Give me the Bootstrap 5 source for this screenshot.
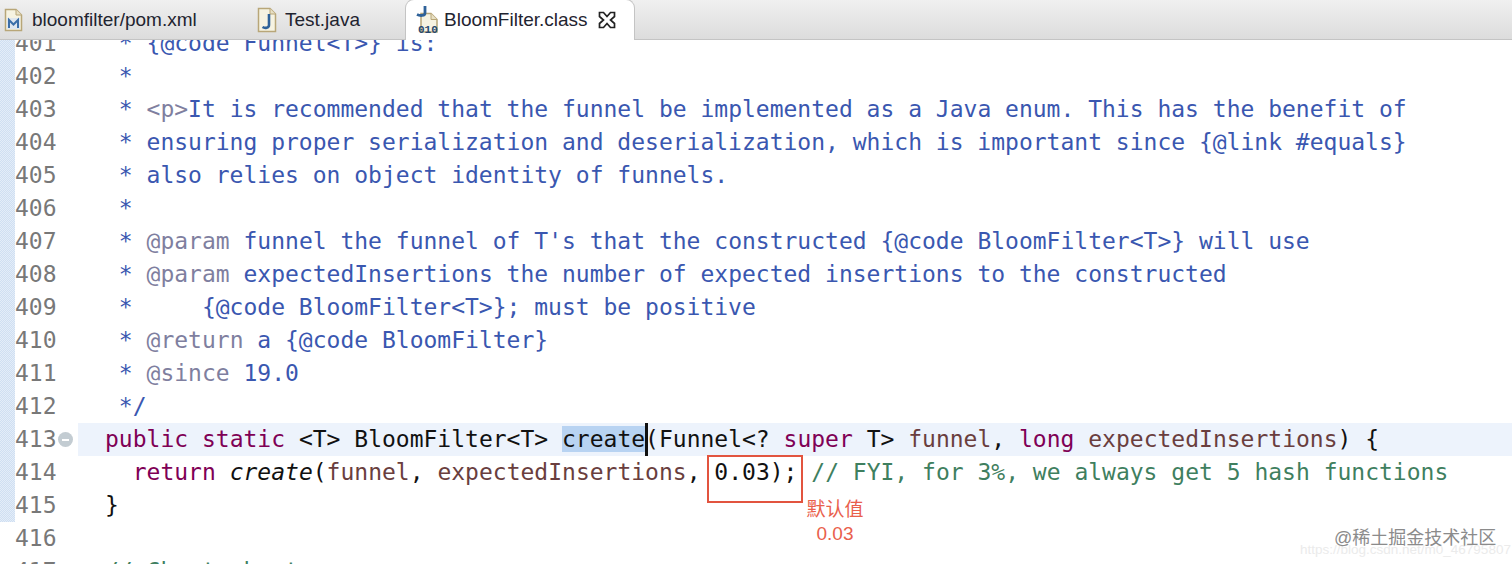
<!DOCTYPE html>
<html lang="en">
<head>
<meta charset="utf-8">
<title>BloomFilter.class</title>
<link href="https://cdn.jsdelivr.net/npm/bootstrap@5.3.0/dist/css/bootstrap.min.css" rel="stylesheet">
<style>
html,body{height:564px;overflow:hidden;background:#fff}
.tabbar{height:40px;background:linear-gradient(#f0f0f0,#dcdcdc);border-bottom:1px solid #c4c4c4;font:19px "Liberation Sans",sans-serif;color:#1f2430}
.tabitem{height:40px}
.tabactive{background:#fff;border:1px solid #c4c4c4;border-bottom:0;border-radius:9px 9px 0 0;margin-top:-1px;height:41px}
.editorpane{height:524px;overflow:hidden}
.strip{width:15px;height:482px;background:repeating-conic-gradient(#cfdff2 0 25%,#e4edf8 0 50%) 0 0/2px 2px;flex:none}
.codewrap{margin-top:-13px;font:23px/33px "DejaVu Sans Mono","Liberation Mono",monospace;color:#3a57b0;flex:1 1 auto;min-width:0}
.cline{height:33px;display:flex;white-space:pre}
.lnum{width:90px;flex:none;color:#787878;position:relative}
.ltext{flex:1 1 auto;min-width:0;position:relative}
.curline{background:linear-gradient(90deg,#fff 0,#fff 63px,#edf3fc 63px)}
.kw{color:#7f0055}.ty{color:#111}.par{color:#6a3e3e}.tag{color:#7f7f9f}.cm{color:#3f7f5f}.it{font-style:italic;color:#111}
.sel{background:#b8d3f2;color:#111}
.caret{display:inline-block;width:3px;height:33px;background:#111;vertical-align:top;margin-right:-3px}
.foldmark{position:absolute;left:43px;top:9px;width:15px;height:15px;border-radius:50%;background:#c3ccd2}
.foldmark::after{content:"";position:absolute;left:4px;top:6.5px;width:7px;height:2px;background:#fff}
.redbox{position:absolute;left:707px;top:455px;width:96px;height:48px;border:2px solid #e2543f}
.note{position:absolute;left:775px;top:498px;width:120px;text-align:center;color:#e9604c;font:19px/24px "Liberation Sans","Noto Sans CJK SC",sans-serif}
.mark1{position:absolute;left:1334px;top:526px;color:#8b8b8b;font:18px/24px "Liberation Sans","Noto Sans CJK SC",sans-serif;white-space:nowrap}
.mark2{position:absolute;left:1300px;top:540px;color:#ebebeb;font:13.500px/20px "Liberation Sans",sans-serif;white-space:nowrap}
</style>
</head>
<body class="position-relative">
<div class="tabbar d-flex align-items-center">
  <div class="tabitem d-flex align-items-center" style="width:257px">
    <svg class="ms-1" width="19" height="24" viewBox="0 0 19 24"><path d="M1.500 1.500H12l5.500 5.500v15.500h-16z" fill="#f6f3e2" stroke="#b8a678" stroke-width="1.500"/><path d="M12 1.500V7h5.500" fill="#e8e0c4" stroke="#b8a678"/><rect x="3" y="10" width="13" height="11" fill="#dfe6ee"/><path d="M5 20v-8l4.500 4.500L14 12v8" fill="none" stroke="#3b6ea8" stroke-width="2"/></svg>
    <span style="margin-left:9px">bloomfilter/pom.xml</span>
  </div>
  <div class="tabitem d-flex align-items-center" style="width:148px">
    <svg width="20" height="26" viewBox="0 0 20 26"><path d="M1.500 1.500H13l5.500 5.500v17.500h-17z" fill="#f6f3e2" stroke="#b8a678" stroke-width="1.500"/><path d="M13 1.500V7h5.500" fill="#e8e0c4" stroke="#b8a678"/><path d="M12 7v11c0 3-4 3.500-6.500 2" fill="none" stroke="#2f6299" stroke-width="2.600"/></svg>
    <span style="margin-left:8px">Test.java</span>
  </div>
  <div class="tabitem tabactive d-flex align-items-center" style="width:230px">
    <svg style="margin-left:9px" width="25" height="30" viewBox="0 0 25 30"><path d="M6 8.500h10l6 6V27H6z" fill="#f6f3e2" stroke="#b8a678" stroke-width="1.500"/><path d="M16 8.500v6h6" fill="#e8e0c4" stroke="#b8a678"/><path d="M10 1v7c0 3-5 3-8 1.500" fill="none" stroke="#2f6299" stroke-width="2.800"/><text x="3" y="28" font-size="11" font-weight="700" fill="#24476f" font-family="Liberation Mono">010</text></svg>
    <span style="margin-left:4px">BloomFilter.class</span>
    <svg style="margin-left:9px" width="20" height="20" viewBox="0 0 20 20"><path d="M2.500 2.500h4L10 6.500l3.500-4h4v4L13.500 10l4 3.500v4h-4L10 13.500l-3.500 4h-4v-4l4-3.500-4-3.500z" fill="#fff" stroke="#222" stroke-width="1.700"/></svg>
  </div>
</div>
<div class="editorpane d-flex">
  <div class="strip"></div>
  <div class="codewrap">
<div class="cline"><span class="lnum">401</span><span class="ltext"> * {@code Funnel&lt;T&gt;} is:</span></div>
<div class="cline"><span class="lnum">402</span><span class="ltext"> *</span></div>
<div class="cline"><span class="lnum">403</span><span class="ltext"> * <span class="tag">&lt;p&gt;</span>It is recommended that the funnel be implemented as a Java enum. This has the benefit of</span></div>
<div class="cline"><span class="lnum">404</span><span class="ltext"> * ensuring proper serialization and deserialization, which is important since {@link #equals}</span></div>
<div class="cline"><span class="lnum">405</span><span class="ltext"> * also relies on object identity of funnels.</span></div>
<div class="cline"><span class="lnum">406</span><span class="ltext"> *</span></div>
<div class="cline"><span class="lnum">407</span><span class="ltext"> * <span class="tag">@param</span> funnel the funnel of T's that the constructed {@code BloomFilter&lt;T&gt;} will use</span></div>
<div class="cline"><span class="lnum">408</span><span class="ltext"> * <span class="tag">@param</span> expectedInsertions the number of expected insertions to the constructed</span></div>
<div class="cline"><span class="lnum">409</span><span class="ltext"> *     {@code BloomFilter&lt;T&gt;}; must be positive</span></div>
<div class="cline"><span class="lnum">410</span><span class="ltext"> * <span class="tag">@return</span> a {@code BloomFilter}</span></div>
<div class="cline"><span class="lnum">411</span><span class="ltext"> * <span class="tag">@since</span> 19.0</span></div>
<div class="cline"><span class="lnum">412</span><span class="ltext"> */</span></div>
<div class="cline curline"><span class="lnum">413<i class="foldmark"></i></span><span class="ltext ty"><span class="kw">public</span> <span class="kw">static</span> &lt;T&gt; BloomFilter&lt;T&gt; <span class="sel">create</span><span class="caret"></span>(Funnel&lt;? <span class="kw">super</span> T&gt; <span class="par">funnel</span>, <span class="kw">long</span> <span class="par">expectedInsertions</span>) {</span></div>
<div class="cline"><span class="lnum">414</span><span class="ltext ty">  <span class="kw">return</span> <span class="it">create</span>(<span class="par">funnel</span>, <span class="par">expectedInsertions</span>, 0.03); <span class="cm">// FYI, for 3%, we always get 5 hash functions</span></span></div>
<div class="cline"><span class="lnum">415</span><span class="ltext ty">}</span></div>
<div class="cline"><span class="lnum">416</span><span class="ltext"></span></div>
<div class="cline"><span class="lnum">417</span><span class="ltext cm">// Cheat sheet:</span></div>
  </div>
</div>
<div class="redbox"></div>
<div class="note">默认值<br>0.03</div>
<div class="mark2">https://blog.csdn.net/m0_46795807</div>
<div class="mark1">@稀土掘金技术社区</div>
</body>
</html>
